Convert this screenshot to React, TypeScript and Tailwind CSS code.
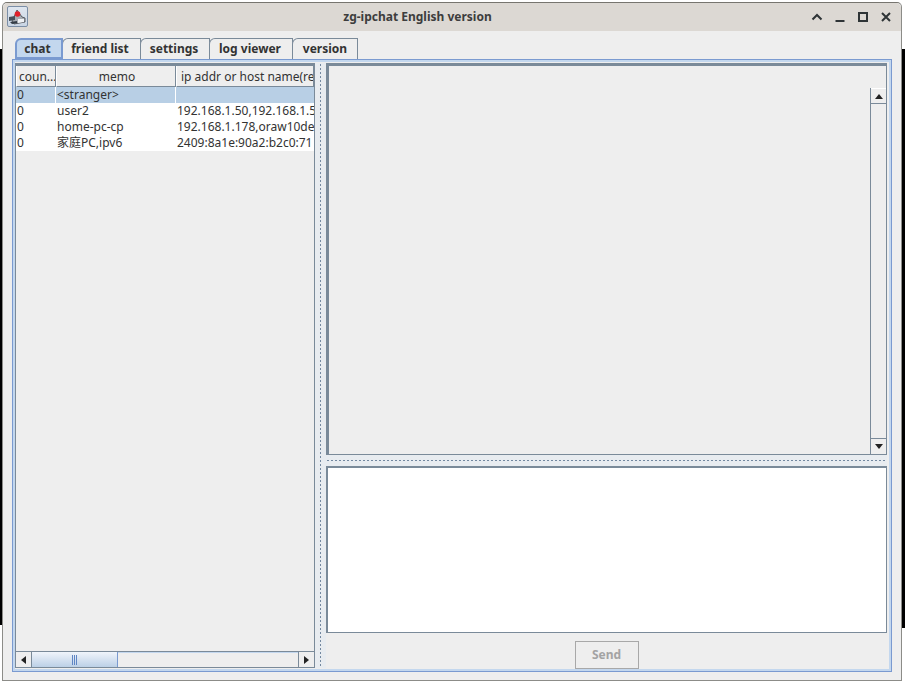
import React from "react";

const font = { fontFamily: '"Noto Sans","Noto Sans CJK SC",sans-serif' };

function Tab({ label, w, active }: { label: string; w: string; active?: boolean }) {
  return (
    <div
      className={
        active
          ? "relative z-10 h-[21px] flex items-center justify-center border-2 border-[#7a9ad0] rounded-tl-[6px] bg-[#c3d7ee] text-[12px] font-bold text-[#333333] " + w
          : "h-[21px] flex items-center justify-center border border-b-0 border-[#7a8a99] rounded-tl-[6px] bg-[#eeeeee] text-[12px] font-bold text-[#333333] -ml-px " + w
      }
    >
      {label}
    </div>
  );
}

function Cell({ w, children, cls }: { w: string; children?: React.ReactNode; cls?: string }) {
  return (
    <div className={"h-full overflow-hidden whitespace-nowrap pl-px text-[12px] leading-[16px] text-[#333333] " + w + " " + (cls ?? "")}>
      {children}
    </div>
  );
}

function Row({ a, b, c, selected }: { a: string; b: string; c: string; selected?: boolean }) {
  const bg = selected ? "bg-[#b8cfe5]" : "bg-white";
  return (
    <div className={"flex h-[16px] " + bg}>
      <Cell w="w-[40px] shrink-0" cls={selected ? "border-r border-white" : ""}>{a}</Cell>
      <Cell w="w-[120px] shrink-0" cls={selected ? "border-r border-white" : ""}>{b}</Cell>
      <Cell w="flex-1">{c}</Cell>
    </div>
  );
}

function Header({ w, children }: { w: string; children: React.ReactNode }) {
  return (
    <div className={"h-full pt-px border-r border-b border-[#7a8a99] border-l-white border-l flex items-center overflow-hidden whitespace-nowrap text-[12px] text-[#333333] bg-[#eeeeee] " + w}>
      {children}
    </div>
  );
}

function Grip({ vertical }: { vertical: boolean }) {
  return vertical ? (
    <div className="w-[11px] shrink-0 bg-[#e8ecf0] flex justify-center">
      <div className="w-[3px] h-full bg-[radial-gradient(circle,#7388a0_1px,transparent_1px)] bg-[length:3px_4px]" />
    </div>
  ) : (
    <div className="h-[11px] shrink-0 bg-[#e8ecf0] flex items-center">
      <div className="h-[3px] w-full bg-[radial-gradient(circle,#7388a0_1px,transparent_1px)] bg-[length:4px_3px]" />
    </div>
  );
}

export default function App() {
  return (
    <div style={font} className="relative w-[905px] h-[683px] overflow-hidden bg-white">
      <div className="absolute left-0 top-[49px] h-[576px] w-[2px] bg-black" />
      <div className="absolute right-0 top-[49px] h-[579px] w-[3px] bg-black" />
      <div className="relative ml-[2px] mt-[2px] w-[900px] h-[679px] flex flex-col bg-[#eeeeee] rounded-t-[5px] border border-[#8c8c88] border-t-[#77756f]">
        {/* Title bar */}
        <div className="h-[28px] shrink-0 flex items-center bg-[#dcd8d3] rounded-t-[5px] pl-[4px] pr-[9px]">
          <div className="w-[21px] h-[21px] -mt-[1px] rounded-[2px] border border-[#7b8ea6] bg-gradient-to-b from-[#dfe6ef] to-[#c9d5e4] flex items-center justify-center">
            <svg width="19" height="19" viewBox="0 0 19 19">
              <path d="M9 3 L14 10 L17 11 L17 15 L6 17 L4 14 L6 10 Z" fill="#a8adb4" stroke="#3c3f44" strokeWidth="0.8" />
              <path d="M1 10 L7 9 L7 13 L1 14 Z" fill="#46505a" />
              <path d="M2 15 L9 14 L9 16 L4 17 Z" fill="#333c46" />
              <path d="M10 12 L16 12 L16 15 L10 16 Z" fill="#f0f2f5" />
              <circle cx="9.500" cy="7" r="2.800" fill="#e0202a" />
            </svg>
          </div>
          <div className="flex-1 text-center text-[12px] font-bold text-[#3d3d3d] pr-[4px]">zg-ipchat English version</div>
          <div className="flex items-center gap-[11px]">
            <svg width="12" height="12" viewBox="0 0 12 12" fill="none" stroke="#2e3436" strokeWidth="2"><path d="M1.500 8.500 L6 4 L10.500 8.500" /></svg>
            <svg width="12" height="12" viewBox="0 0 12 12" fill="none" stroke="#2e3436" strokeWidth="2"><path d="M1.500 10 H10.500" /></svg>
            <svg width="12" height="12" viewBox="0 0 12 12" fill="none" stroke="#2e3436" strokeWidth="2"><rect x="2" y="2" width="8" height="8" /></svg>
            <svg width="12" height="12" viewBox="0 0 12 12" fill="none" stroke="#2e3436" strokeWidth="2"><path d="M2 2 L10 10 M10 2 L2 10" /></svg>
          </div>
        </div>
        {/* Body */}
        <div className="flex-1 min-h-0 flex flex-col px-[9px] pt-[7px] pb-[8px]">
          <div className="flex items-end pl-[3px] h-[21px] shrink-0">
            <Tab label="chat" w="w-[48px] pr-[3px]" active />
            <Tab label="friend list" w="w-[79px] pr-[3px]" />
            <Tab label="settings" w="w-[70px] pr-[2px]" />
            <Tab label="log viewer" w="w-[84px] pr-[2px]" />
            <Tab label="version" w="w-[66px]" />
          </div>
          <div className="flex-1 min-h-0 flex border border-[#7a9ad0] bg-[#eeeeee] shadow-[inset_0_0_0_2px_#c3d7ee]">
            <div className="flex-1 min-w-0 flex pl-[2px] pr-[4px] pt-[3px] pb-[3px]">
              {/* Left */}
              <div className="w-[300px] shrink-0 flex flex-col border border-[#7a8a99] border-t-[3px]">
                <div className="flex h-[21px] shrink-0">
                  <Header w="w-[40px] shrink-0 pl-[2px]">coun...</Header>
                  <Header w="w-[120px] shrink-0 justify-center pl-[2px]">memo</Header>
                  <Header w="flex-1 pl-[4px]">ip addr or host name(re</Header>
                </div>
                <Row a="0" b="<stranger>" c="" selected />
                <Row a="0" b="user2" c="192.168.1.50,192.168.1.50" />
                <Row a="0" b="home-pc-cp" c="192.168.1.178,oraw10de" />
                <Row a="0" b="家庭PC,ipv6" c="2409:8a1e:90a2:b2c0:71" />
                <div className="flex-1" />
                {/* H scrollbar */}
                <div className="h-[16px] shrink-0 flex border-t border-[#7a8a99] bg-[#eeeeee]">
                  <div className="w-[16px] shrink-0 border-r border-[#7a8a99] flex items-center justify-center">
                    <div className="w-0 h-0 border-y-[4px] border-y-transparent border-r-[5px] border-r-[#222222]" />
                  </div>
                  <div className="w-[86px] shrink-0 border-r border-[#7a9ad0] flex items-center justify-center gap-[1px] bg-gradient-to-b from-[#f0f5fb] to-[#bcd0e6]">
                    <div className="w-px h-[10px] bg-[#5f86c4]" />
                    <div className="w-px h-[10px] bg-[#5f86c4]" />
                    <div className="w-px h-[10px] bg-[#5f86c4]" />
                  </div>
                  <div className="flex-1 border-t border-[#c3d7ee]" />
                  <div className="w-[16px] shrink-0 border-l border-[#7a8a99] flex items-center justify-center">
                    <div className="w-0 h-0 border-y-[4px] border-y-transparent border-l-[5px] border-l-[#222222]" />
                  </div>
                </div>
              </div>
              <Grip vertical />
              {/* Right */}
              <div className="flex-1 min-w-0 flex flex-col">
                <div className="h-[392px] shrink-0 flex flex-col border border-[#7a8a99] border-t-[3px] border-l-[3px]">
                  <div className="flex-1 min-h-0 flex justify-end pt-[22px]">
                    <div className="w-[16px] flex flex-col border-l border-[#7a8a99]">
                      <div className="h-[16px] shrink-0 border-b border-[#7a8a99] border-t border-t-white flex items-center justify-center">
                        <div className="w-0 h-0 border-x-[4px] border-x-transparent border-b-[5px] border-b-[#222222]" />
                      </div>
                      <div className="flex-1" />
                      <div className="h-[16px] shrink-0 border-t border-[#7a8a99] flex items-center justify-center">
                        <div className="w-0 h-0 border-x-[4px] border-x-transparent border-t-[5px] border-t-[#222222]" />
                      </div>
                    </div>
                  </div>
                </div>
                <Grip vertical={false} />
                <div className="h-[167px] shrink-0 bg-white border border-[#7a8a99] border-t-2 border-l-2" />
                <div className="flex-1 flex justify-center items-start pt-[8px]">
                  <div className="w-[64px] h-[28px] border border-[#a8a8a8] flex items-center justify-center text-[12px] font-bold text-[#a3a3a3]">
                    Send
                  </div>
                </div>
              </div>
            </div>
          </div>
        </div>
      </div>
    </div>
  );
}
